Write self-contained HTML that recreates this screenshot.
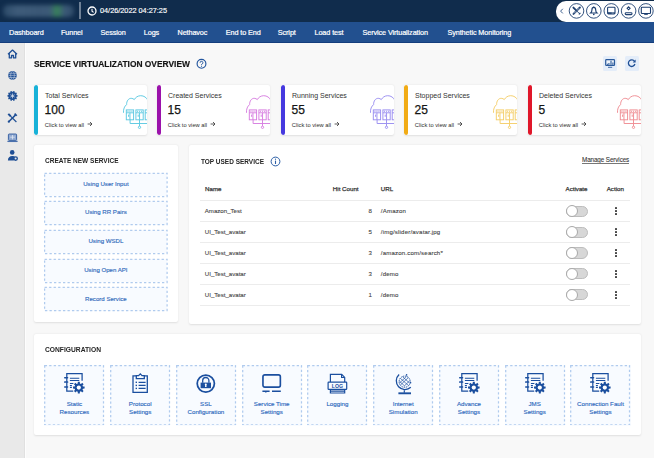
<!DOCTYPE html>
<html><head><meta charset="utf-8">
<style>
*{box-sizing:border-box;margin:0;padding:0}
html,body{width:654px;height:458px;overflow:hidden;background:#f8f8f8;font-family:"Liberation Sans",sans-serif;color:#222;position:relative}
.a{position:absolute;white-space:nowrap}
#hdr{left:0;top:0;width:654px;height:21.5px;background:#102c4c}
#logo{left:3px;top:5px;width:71px;height:12px;border-radius:5px;background:linear-gradient(90deg,#2c4a69 0%,#3f5c7a 20%,#3b5876 50%,#3d5a78 66%,#388458 76%,#3c5a78 86%,#2f4c6a 100%);filter:blur(2.2px)}
#sep{left:79px;top:2px;width:2px;height:17px;background:#6f8196}
#dt{left:100px;top:5.8px;font-size:7.3px;color:#fff;-webkit-text-stroke:0.15px #fff}
#pill{left:556px;top:1px;width:110px;height:20.5px;border-radius:10px;background:#fff}
#nav{left:0;top:21.5px;width:654px;height:21px;background:#22508f;border-bottom:1.5px solid #143d7c}
.nv{top:27.8px;font-size:7.25px;color:#fff;letter-spacing:-0.1px;-webkit-text-stroke:0.2px #fff}
#side{left:0;top:42.5px;width:25px;height:416px;background:#e9e9e9;border-right:0.8px solid #e0e0e0;box-shadow:1px 0 0 #fdfdfd}
#title{left:34px;top:58.8px;font-size:8.7px;transform:scaleX(.9675);transform-origin:0 0;font-weight:bold;color:#141414;-webkit-text-stroke:0.15px #141414}
.card{position:absolute;top:85px;width:112.5px;height:49.8px;background:#fff;box-shadow:0 0.5px 2px rgba(0,0,0,.1);overflow:hidden;border-radius:2px}
.card .bar{position:absolute;left:0;top:0;width:3.7px;height:49.8px;border-radius:2px}
.card .t{position:absolute;left:11px;top:6.8px;font-size:7px;color:#333;white-space:nowrap}
.card .n{position:absolute;left:10.6px;top:18.2px;font-size:12px;color:#151515;white-space:nowrap;-webkit-text-stroke:0.25px #151515}
.card .c{position:absolute;left:10.8px;top:35.6px;font-size:5.75px;color:#2e2e2e;white-space:nowrap}
.card svg{position:absolute;left:86px;top:7px}
.panel{position:absolute;background:#fff;box-shadow:0 0.5px 2px rgba(0,0,0,.1);border-radius:2px}
.ph{font-size:7.7px;font-weight:bold;color:#252525;transform-origin:0 0}
.db{position:absolute;left:44.4px;width:123px;height:23.5px;background:#f8fbff}
.db svg{position:absolute;left:0;top:0}
.db span{position:absolute;left:0;width:100%;top:7.3px;text-align:center;font-size:6.1px;color:#336cbc;-webkit-text-stroke:0.15px #336cbc}
.th{font-size:6.2px;color:#333;-webkit-text-stroke:0.25px #333}
.td{font-size:6.1px;color:#444;-webkit-text-stroke:0.1px #444}
.hr{position:absolute;left:200px;width:430px;height:1px;background:#ececec}
.tog{position:absolute;left:566.2px;width:21.6px;height:11.2px;border-radius:6px;background:#d7d7d7;border:0.8px solid #bdbdbd}
.tog i{position:absolute;left:-1.5px;top:-1.3px;width:12.2px;height:12.2px;border-radius:50%;background:#fff;border:0.8px solid #a9a9a9}
.kb{position:absolute;left:614.8px;width:2.4px}
.kb i{display:block;width:2.2px;height:2px;background:#3a3a3a;margin-bottom:1px;border-radius:0.4px}
.cfg{position:absolute;top:365px;width:60.2px;height:60.5px;background:#f8fbff}
.cfg>svg.bd{position:absolute;left:0;top:0}
.cfg .l{position:absolute;left:0;top:34.8px;width:100%;text-align:center;font-size:6.2px;color:#2d69bd;line-height:8.6px;white-space:nowrap;-webkit-text-stroke:0.14px #2d69bd}
.cfg .ic{position:absolute;left:20px;top:7px}
</style></head><body>
<div id="hdr" class="a"></div>
<div id="logo" class="a"></div>
<div id="sep" class="a"></div>
<svg class="a" style="left:87px;top:6px" width="10" height="10" viewBox="0 0 10 10"><circle cx="5" cy="5" r="4" fill="none" stroke="#fff" stroke-width="1.3"/><path d="M5 2.7v2.5l1.6 1.2" fill="none" stroke="#fff" stroke-width="1.1"/></svg>
<div id="dt" class="a">04/26/2022 04:27:25</div>
<div id="pill" class="a"></div>
<svg class="a" style="left:556px;top:0" width="98" height="22" viewBox="556 0 98 22">
<path d="M562.8 8.8l-2.2 2.3 2.2 2.3" fill="none" stroke="#3d5f8e" stroke-width="1"/>
<g fill="none" stroke="#1d3f70" stroke-width="0.9">
<circle cx="576.5" cy="10.9" r="7.3"/><circle cx="593.8" cy="10.9" r="7.3"/><circle cx="611.3" cy="10.9" r="7.3"/><circle cx="628.6" cy="10.9" r="7.3"/><circle cx="645.9" cy="10.9" r="7.3"/>
</g>
<g fill="none" stroke="#1d3f70" stroke-width="1.1">
<path d="M579.9 7.5L573.5 13.9" stroke-width="1.9" stroke-linecap="round"/><path d="M579.3 8.1L574.1 13.3" stroke="#fff" stroke-width="0.6"/>
<path d="M573.4 7.6L575.7 9.9" stroke-width="1.9" stroke-linecap="round"/><path d="M575.7 9.9L578.9 13.1" stroke-width="0.9"/>
<path d="M578.4 13.9l1.5-1.5 0.9 0.9-1.5 1.5z" fill="#1d3f70" stroke="none"/>
<path d="M590.6 13C591.8 12 591.9 11.4 591.9 9.9C591.9 8.3 592.7 7.4 593.8 7.4C594.9 7.4 595.7 8.3 595.7 9.9C595.7 11.4 595.8 12 597 13Z" stroke-width="1.15"/>
<circle cx="593.8" cy="14.3" r="0.85" fill="#1d3f70" stroke="none"/><circle cx="593.8" cy="6.7" r="0.5" fill="#1d3f70" stroke="none"/>
<rect x="607.6" y="7.3" width="7.4" height="6.6" rx="0.8"/><path d="M607.8 13h7" stroke-width="1.6"/><path d="M611.6 13h2.2" stroke="#fff" stroke-width="0.5"/>
<path d="M628.6 6.8l1.5 1.5-1.5 1.5-1.5-1.5z"/><rect x="625.2" y="12.7" width="6.8" height="1.9" rx="0.9"/>
<rect x="641.3" y="7.3" width="9.2" height="6.2" rx="0.7"/><path d="M644.2 14.2h3.6" stroke-width="1.3"/>
</g>
</svg>
<div id="nav" class="a"></div>
<div class="a nv" style="left:9px">Dashboard</div>
<div class="a nv" style="left:61px">Funnel</div>
<div class="a nv" style="left:100.5px">Session</div>
<div class="a nv" style="left:143.8px">Logs</div>
<div class="a nv" style="left:177.5px">Nethavoc</div>
<div class="a nv" style="left:225.8px">End to End</div>
<div class="a nv" style="left:277.8px">Script</div>
<div class="a nv" style="left:314.5px">Load test</div>
<div class="a nv" style="left:362.5px">Service Virtualization</div>
<div class="a nv" style="left:447.5px">Synthetic Monitoring</div>
<div id="side" class="a"></div>
<svg class="a" style="left:0;top:42px" width="25" height="125" viewBox="0 42 25 125">
<g fill="none" stroke="#1f4f95" stroke-width="1.3" stroke-linejoin="round">
<path d="M8 54.3l4.5-4.2 4.5 4.2M9.3 53.3v4.6h2.2v-2.4h2v2.4h2.2v-4.6"/>
</g>
<circle cx="12.5" cy="75.4" r="4.3" fill="#1f4f95"/>
<g stroke="#c9d4e6" stroke-width="0.55" fill="none"><path d="M8.4 75.4h8.2M9 73.3h7M9 77.5h7"/><ellipse cx="12.5" cy="75.4" rx="1.9" ry="4"/></g>
<path d="M17.56 95.26 L17.56 96.54 L16.63 96.69 L16.30 97.69 L16.97 98.36 L16.22 99.39 L15.38 98.96 L14.52 99.58 L14.67 100.51 L13.46 100.91 L13.03 100.07 L11.97 100.07 L11.54 100.91 L10.33 100.51 L10.48 99.58 L9.62 98.96 L8.78 99.39 L8.03 98.36 L8.70 97.69 L8.37 96.69 L7.44 96.54 L7.44 95.26 L8.37 95.11 L8.70 94.11 L8.03 93.44 L8.78 92.41 L9.62 92.84 L10.48 92.22 L10.33 91.29 L11.54 90.89 L11.97 91.73 L13.03 91.73 L13.46 90.89 L14.67 91.29 L14.52 92.22 L15.38 92.84 L16.22 92.41 L16.97 93.44 L16.30 94.11 L16.63 95.11Z" fill="#1f4f95"/>
<g stroke="#dfe6f0" stroke-width="0.7" fill="none"><path d="M12.5 93.5v4.8M10.4 94.7l4.2 2.4M14.6 94.7l-4.2 2.4"/></g>
<path d="M8.3 113.9l2.4 2.4" stroke="#1f4f95" stroke-width="2" fill="none"/><path d="M10.5 116.1l5.9 5.9" stroke="#1f4f95" stroke-width="1.2" fill="none"/>
<path d="M15.6 114.9l-6.9 6.9" stroke="#1f4f95" stroke-width="1.5" fill="none"/><path d="M14.6 113.6l2.2 2.2" stroke="#1f4f95" stroke-width="1.6" fill="none"/><circle cx="8.8" cy="121.7" r="1.1" fill="#1f4f95"/>
<rect x="8.4" y="134" width="8.2" height="6.4" rx="0.8" fill="#93abd2" stroke="#2f5a9e" stroke-width="0.9"/>
<path d="M7.4 141.4h10.2" stroke="#4a70ad" stroke-width="1.3"/>
<path d="M10.2 137.2h4.6M12.5 135v4.4" stroke="#e6ecf5" stroke-width="0.7"/>
<circle cx="12.2" cy="152.4" r="2.3" fill="#1f4f95"/>
<path d="M7.9 160.4c0-2.7 1.7-4.3 4.3-4.3 1.3 0 2.4.4 3.1 1.1l-1.6 3.2z" fill="#1f4f95"/>
<circle cx="15.6" cy="158.6" r="2.4" fill="#1f4f95"/><circle cx="15.6" cy="158.6" r="1" fill="#e9e9e9"/>
</svg>

<div id="title" class="a">SERVICE VIRTUALIZATION OVERVIEW</div>
<svg class="a" style="left:195px;top:58px" width="13" height="12" viewBox="0 0 13 12"><circle cx="6.5" cy="5.8" r="4.4" fill="none" stroke="#22559e" stroke-width="1.15"/><path d="M5.1 4.7a1.4 1.4 0 1 1 1.9 1.3c-.4.2-.5.5-.5.9v.3" fill="none" stroke="#22559e" stroke-width="1"/><circle cx="6.5" cy="8.3" r="0.55" fill="#22559e"/></svg>
<div class="a" style="left:603px;top:56.3px;width:14px;height:14.3px;border-radius:1.5px;background:#e4edf9"></div>
<div class="a" style="left:624.8px;top:56.3px;width:14px;height:14.3px;border-radius:1.5px;background:#e4edf9"></div>
<svg class="a" style="left:603px;top:56px" width="36" height="15" viewBox="603 56 36 15">
<rect x="605.7" y="59.7" width="8.8" height="5.8" rx="0.7" fill="#eef3fa" stroke="#2a5a9c" stroke-width="1.2"/>
<path d="M607.3 65v-1.2M608.9 65v-1.9M611 65v-4.2M612.9 65v-2.6" stroke="#2a5a9c" stroke-width="1.1"/>
<path d="M608 67.3h4.2" stroke="#2a5a9c" stroke-width="0.9"/>
<path d="M634.5 61.4a3.3 3.3 0 1 0 .4 2.6" fill="none" stroke="#1f4f95" stroke-width="1.3"/>
<path d="M635.6 59.6v2.8h-2.8z" fill="#1f4f95"/>
</svg>

<div class="card" style="left:34px"><div class="bar" style="background:#18b2d8"></div><div class="t">Total Services</div><div class="n">100</div><div class="c">Click to view all<svg width="6" height="6" viewBox="0 0 6 6" style="position:static;vertical-align:-0.5px;margin-left:2.6px"><path d="M0.6 3h4.4M3 1l2 2-2 2" fill="none" stroke="#333" stroke-width="0.8"/></svg></div><svg width="30" height="40" viewBox="0 0 30 40"><use href="#cloud" stroke="#5dc9e2"/></svg></div>
<div class="card" style="left:157px"><div class="bar" style="background:#9b12ab"></div><div class="t">Created Services</div><div class="n">15</div><div class="c">Click to view all<svg width="6" height="6" viewBox="0 0 6 6" style="position:static;vertical-align:-0.5px;margin-left:2.6px"><path d="M0.6 3h4.4M3 1l2 2-2 2" fill="none" stroke="#333" stroke-width="0.8"/></svg></div><svg width="30" height="40" viewBox="0 0 30 40"><use href="#cloud" stroke="#d77de0"/></svg></div>
<div class="card" style="left:281px"><div class="bar" style="background:#4639df"></div><div class="t">Running Services</div><div class="n">55</div><div class="c">Click to view all<svg width="6" height="6" viewBox="0 0 6 6" style="position:static;vertical-align:-0.5px;margin-left:2.6px"><path d="M0.6 3h4.4M3 1l2 2-2 2" fill="none" stroke="#333" stroke-width="0.8"/></svg></div><svg width="30" height="40" viewBox="0 0 30 40"><use href="#cloud" stroke="#9a8ef0"/></svg></div>
<div class="card" style="left:404px"><div class="bar" style="background:#f1ab15"></div><div class="t">Stopped Services</div><div class="n">25</div><div class="c">Click to view all<svg width="6" height="6" viewBox="0 0 6 6" style="position:static;vertical-align:-0.5px;margin-left:2.6px"><path d="M0.6 3h4.4M3 1l2 2-2 2" fill="none" stroke="#333" stroke-width="0.8"/></svg></div><svg width="30" height="40" viewBox="0 0 30 40"><use href="#cloud" stroke="#f4cf6a"/></svg></div>
<div class="card" style="left:528px"><div class="bar" style="background:#e0172a"></div><div class="t">Deleted Services</div><div class="n">5</div><div class="c">Click to view all<svg width="6" height="6" viewBox="0 0 6 6" style="position:static;vertical-align:-0.5px;margin-left:2.6px"><path d="M0.6 3h4.4M3 1l2 2-2 2" fill="none" stroke="#333" stroke-width="0.8"/></svg></div><svg width="30" height="40" viewBox="0 0 30 40"><use href="#cloud" stroke="#ef8d93"/></svg></div>
<svg width="0" height="0" style="position:absolute"><defs>
<g id="cloud" fill="none" stroke-width="0.95">
<path d="M3.5 20.8C3.2 17.2 4.5 14.2 6.6 12.6C6.5 9 8.5 6.3 11.2 6.3C12.5 6.3 13.6 6.9 14.3 7.6C15.5 5.3 17.8 3.8 20.7 3.7C24 3.7 26.5 5.5 28 8.5"/>
<rect x="6.3" y="17.9" width="7.3" height="9.9"/><path d="M6.3 20.8h7.3M9.95 20.8v7M7.4 19.3h1.1M9.4 19.3h1.1M11.4 19.3h1.1M8.6 22.6v2.2"/>
<rect x="15.9" y="17.9" width="7.3" height="9.9"/><path d="M15.9 20.8h7.3M19.55 20.8v7M17 19.3h1.1M19 19.3h1.1M21 19.3h1.1M18.2 22.6v2.2"/>
<rect x="25.2" y="17.9" width="7.3" height="9.9"/><path d="M25.2 20.8h7.3"/>
<path d="M10.1 27.8v3.7h20M19.5 27.8v6.3"/><circle cx="19.5" cy="35.3" r="1.15"/>
</g>
<rect id="dash" x="0.6" y="0.3" width="122.5" height="23.2" fill="none" stroke="#b0cbee" stroke-width="1.25" stroke-dasharray="2.3 2.2"/>
<rect id="dash2" x="0.7" y="0.6" width="58.8" height="59.3" fill="none" stroke="#b0cbee" stroke-width="1.25" stroke-dasharray="2.3 2.2"/>
<path id="nb" d="M0 0"/>
</defs></svg>

<div class="panel" style="left:34px;top:144.8px;width:144.4px;height:177.4px"></div>
<div class="a ph" style="left:45px;top:155.6px;transform:scaleX(.846)">CREATE NEW SERVICE</div>
<div class="db" style="top:172.5px"><svg width="125" height="25" style="overflow:visible"><use href="#dash"/></svg><span>Using User Input</span></div>
<div class="db" style="top:201.2px"><svg width="125" height="25" style="overflow:visible"><use href="#dash"/></svg><span>Using RR Pairs</span></div>
<div class="db" style="top:229.9px"><svg width="125" height="25" style="overflow:visible"><use href="#dash"/></svg><span>Using WSDL</span></div>
<div class="db" style="top:258.6px"><svg width="125" height="25" style="overflow:visible"><use href="#dash"/></svg><span>Using Open API</span></div>
<div class="db" style="top:287.3px"><svg width="125" height="25" style="overflow:visible"><use href="#dash"/></svg><span>Record Service</span></div>

<div class="panel" style="left:188.6px;top:144.8px;width:452px;height:179.3px"></div>
<div class="a ph" style="left:200.8px;top:157px;transform:scaleX(.842)">TOP USED SERVICE</div>
<svg class="a" style="left:269.7px;top:156.2px" width="11" height="11" viewBox="0 0 11 11"><circle cx="5.5" cy="5.5" r="4.4" fill="none" stroke="#2b5ea6" stroke-width="1"/><path d="M5.5 4.6v3.4" stroke="#2b5ea6" stroke-width="1.1"/><circle cx="5.5" cy="3.2" r="0.6" fill="#2b5ea6"/></svg>
<div class="a" style="left:582px;top:156.2px;font-size:6.3px;letter-spacing:-0.1px;color:#333;-webkit-text-stroke:0.08px #333">Manage Services</div><div class="a" style="left:582.3px;top:162.9px;width:47px;height:0.6px;background:#777"></div>
<div class="a th" style="left:205px;top:184.6px">Name</div>
<div class="a th" style="left:332.8px;top:184.6px">Hit Count</div>
<div class="a th" style="left:380.8px;top:184.6px">URL</div>
<div class="a th" style="left:565.5px;top:184.6px">Activate</div>
<div class="a th" style="left:606.7px;top:184.6px">Action</div>
<div class="hr" style="top:200px"></div>
<div class="hr" style="top:221px"></div>
<div class="hr" style="top:242px"></div>
<div class="hr" style="top:263px"></div>
<div class="hr" style="top:284px"></div>
<div class="hr" style="top:304.5px"></div>

<div class="a td" style="left:204.8px;top:207px">Amazon_Test</div>
<div class="a td" style="left:204.8px;top:228px">UI_Test_avatar</div>
<div class="a td" style="left:204.8px;top:249px">UI_Test_avatar</div>
<div class="a td" style="left:204.8px;top:270px">UI_Test_avatar</div>
<div class="a td" style="left:204.8px;top:290.8px">UI_Test_avatar</div>
<div class="a td" style="left:368.5px;top:207px">8</div>
<div class="a td" style="left:368.5px;top:228px">5</div>
<div class="a td" style="left:368.5px;top:249px">3</div>
<div class="a td" style="left:368.5px;top:270px">3</div>
<div class="a td" style="left:368.5px;top:290.8px">1</div>
<div class="a td" style="letter-spacing:0.17px;left:380.8px;top:207px">/Amazon</div>
<div class="a td" style="letter-spacing:0.17px;left:380.8px;top:228px">/img/slider/avatar.jpg</div>
<div class="a td" style="letter-spacing:0.17px;left:380.8px;top:249px">/amazon.com/search*</div>
<div class="a td" style="letter-spacing:0.17px;left:380.8px;top:270px">/demo</div>
<div class="a td" style="letter-spacing:0.17px;left:380.8px;top:290.8px">/demo</div>
<div class="tog" style="top:205.6px"><i></i></div>
<div class="tog" style="top:226.5px"><i></i></div>
<div class="tog" style="top:247.4px"><i></i></div>
<div class="tog" style="top:268.3px"><i></i></div>
<div class="tog" style="top:289.2px"><i></i></div>
<div class="kb" style="top:207.0px"><i></i><i></i><i></i></div>
<div class="kb" style="top:227.9px"><i></i><i></i><i></i></div>
<div class="kb" style="top:248.8px"><i></i><i></i><i></i></div>
<div class="kb" style="top:269.7px"><i></i><i></i><i></i></div>
<div class="kb" style="top:290.6px"><i></i><i></i><i></i></div>

<div class="panel" style="left:34px;top:334.4px;width:607px;height:101px"></div>
<div class="a ph" style="left:44.8px;top:344.6px;transform:scaleX(.87)">CONFIGURATION</div>
<!--CFG-->
<div class="cfg" style="left:44.3px"><svg class="bd" width="61" height="60"><use href="#dash2"/></svg><svg class="ic" width="23" height="23" viewBox="0 0 23 23"><g fill="none" stroke="#1b4f9f" stroke-width="1.25"><path d="M18.1 8.8V1.6H2.8V19H9.4"/></g>
<g fill="#1b4f9f"><rect x="0" y="5.05" width="4.3" height="1.5" rx="0.7"/><rect x="0" y="9.35" width="4.3" height="1.5" rx="0.7"/><rect x="0" y="14.25" width="4.3" height="1.5" rx="0.7"/></g>
<g stroke="#1b4f9f" stroke-width="1.05"><path d="M5.9 6.3h9.4M5.9 8.4h9.4M5.9 11.4h3.6M5.9 13.6h2M5.9 15.5h2"/></g>
<g transform="translate(-0.2 0.1)"><path d="M20.81 14.49 L20.81 16.51 L19.16 16.57 L18.70 17.69 L19.83 18.89 L18.39 20.33 L17.19 19.20 L16.07 19.66 L16.01 21.31 L13.99 21.31 L13.93 19.66 L12.81 19.20 L11.61 20.33 L10.17 18.89 L11.30 17.69 L10.84 16.57 L9.19 16.51 L9.19 14.49 L10.84 14.43 L11.30 13.31 L10.17 12.11 L11.61 10.67 L12.81 11.80 L13.93 11.34 L13.99 9.69 L16.01 9.69 L16.07 11.34 L17.19 11.80 L18.39 10.67 L19.83 12.11 L18.70 13.31 L19.16 14.43Z" fill="#1b4f9f" stroke="#fff" stroke-width="1.3" paint-order="stroke"/><circle cx="15" cy="15.5" r="2.1" fill="#fff"/></g></svg><div class="l">Static<br>Resources</div></div>
<div class="cfg" style="left:110.1px"><svg class="bd" width="61" height="60"><use href="#dash2"/></svg><svg class="ic" width="23" height="23" viewBox="0 0 23 23"><g fill="none" stroke="#1b4f9f" stroke-width="1.3"><path d="M6.2 3.9H3V20.3H17.3V3.9H14.4"/><path d="M6.3 6.6H14.3L14.3 3.6 12 3.6 10.3 1.9 8.6 3.6 6.3 3.6Z"/></g>
<g fill="#1b4f9f"><rect x="5.6" y="9.6" width="1.4" height="1.4"/><rect x="5.6" y="12.7" width="1.4" height="1.4"/><rect x="5.6" y="15.7" width="1.4" height="1.4"/></g>
<g stroke="#1b4f9f" stroke-width="1.2"><path d="M8.6 10.3h7M8.6 13.4h7M8.6 16.4h7"/></g></svg><div class="l">Protocol<br>Settings</div></div>
<div class="cfg" style="left:175.8px"><svg class="bd" width="61" height="60"><use href="#dash2"/></svg><svg class="ic" width="23" height="23" viewBox="0 0 23 23"><circle cx="9.8" cy="11.6" r="8.6" fill="none" stroke="#1b4f9f" stroke-width="1.75"/>
<path d="M6.7 10.8V8.6a3.1 3.1 0 0 1 6.2 0v2.2" fill="none" stroke="#1b4f9f" stroke-width="1.3"/>
<rect x="4.6" y="10.6" width="10.4" height="5.6" fill="#1b4f9f"/><circle cx="9.8" cy="12.6" r="1" fill="#fff"/><path d="M9.3 12.8h1l.3 2.2h-1.6z" fill="#fff"/></svg><div class="l">SSL<br>Configuration</div></div>
<div class="cfg" style="left:241.6px"><svg class="bd" width="61" height="60"><use href="#dash2"/></svg><svg class="ic" width="23" height="23" viewBox="0 0 23 23"><rect x="0.95" y="2.9" width="17.4" height="12.2" rx="1.8" fill="none" stroke="#1b4f9f" stroke-width="1.65"/>
<path d="M0.4 19.2h7.2M10 19.2h8.8" stroke="#1b4f9f" stroke-width="1.6"/><path d="M2.8 19.6h2.2l-1.1 1.3z" fill="#1b4f9f"/></svg><div class="l">Service Time<br>Settings</div></div>
<div class="cfg" style="left:307.3px"><svg class="bd" width="61" height="60"><use href="#dash2"/></svg><svg class="ic" width="23" height="23" viewBox="0 0 23 23"><g fill="none" stroke="#1b4f9f" stroke-width="1.2"><path d="M3.4 10V2.4H14.7L17.7 5.4V10"/><path d="M14.6 2.6V5.5H17.5"/><rect x="1.1" y="10.2" width="18.6" height="7.2" rx="0.6"/><path d="M3.4 17.4V21H17.7V17.4M3.4 19.2H17.7"/></g>
<text x="10.4" y="16" font-family="Liberation Sans" font-size="5.2" font-weight="bold" text-anchor="middle" fill="#1b4f9f">LOG</text></svg><div class="l">Logging</div></div>
<div class="cfg" style="left:373.1px"><svg class="bd" width="61" height="60"><use href="#dash2"/></svg><svg class="ic" width="23" height="23" viewBox="0 0 23 23"><circle cx="11.7" cy="9.7" r="5.6" fill="none" stroke="#1b4f9f" stroke-width="1" stroke-dasharray="1.2 0.8"/>
<g stroke="#1b4f9f" stroke-width="0.8" fill="none" opacity="0.85"><path d="M7.5 6.5l8 7M9.5 4.6l7 6.4M6.5 9.3l5.5 5M15.5 5.4l-8 7.6M13.5 4.4l-7 6.6M16.8 8.6l-5.3 5.2"/></g>
<path d="M6.1 2.6A8.2 8.2 0 0 0 17.8 15.3" fill="none" stroke="#1b4f9f" stroke-width="1.3"/>
<circle cx="13.6" cy="2.9" r="0.8" fill="#1b4f9f"/><circle cx="17.6" cy="10.8" r="0.8" fill="#1b4f9f"/>
<path d="M11.3 18.2v2.6" stroke="#1b4f9f" stroke-width="1.2"/><path d="M5.4 21.3h12.6" stroke="#1b4f9f" stroke-width="1.9"/></svg><div class="l">Internet<br>Simulation</div></div>
<div class="cfg" style="left:438.9px"><svg class="bd" width="61" height="60"><use href="#dash2"/></svg><svg class="ic" width="23" height="23" viewBox="0 0 23 23"><g fill="none" stroke="#1b4f9f" stroke-width="1.25"><path d="M18.1 8.8V1.6H2.8V19H9.4"/></g>
<g fill="#1b4f9f"><rect x="0" y="5.05" width="4.3" height="1.5" rx="0.7"/><rect x="0" y="9.35" width="4.3" height="1.5" rx="0.7"/><rect x="0" y="14.25" width="4.3" height="1.5" rx="0.7"/></g>
<g stroke="#1b4f9f" stroke-width="1.05"><path d="M5.9 6.3h9.4M5.9 8.4h9.4M5.9 11.4h3.6M5.9 13.6h2M5.9 15.5h2"/></g>
<g transform="translate(-0.2 0.1)"><path d="M20.81 14.49 L20.81 16.51 L19.16 16.57 L18.70 17.69 L19.83 18.89 L18.39 20.33 L17.19 19.20 L16.07 19.66 L16.01 21.31 L13.99 21.31 L13.93 19.66 L12.81 19.20 L11.61 20.33 L10.17 18.89 L11.30 17.69 L10.84 16.57 L9.19 16.51 L9.19 14.49 L10.84 14.43 L11.30 13.31 L10.17 12.11 L11.61 10.67 L12.81 11.80 L13.93 11.34 L13.99 9.69 L16.01 9.69 L16.07 11.34 L17.19 11.80 L18.39 10.67 L19.83 12.11 L18.70 13.31 L19.16 14.43Z" fill="#1b4f9f" stroke="#fff" stroke-width="1.3" paint-order="stroke"/><circle cx="15" cy="15.5" r="2.1" fill="#fff"/></g></svg><div class="l">Advance<br>Settings</div></div>
<div class="cfg" style="left:504.6px"><svg class="bd" width="61" height="60"><use href="#dash2"/></svg><svg class="ic" width="23" height="23" viewBox="0 0 23 23"><g fill="none" stroke="#1b4f9f" stroke-width="1.25"><path d="M18.1 8.8V1.6H2.8V19H9.4"/></g>
<g fill="#1b4f9f"><rect x="0" y="5.05" width="4.3" height="1.5" rx="0.7"/><rect x="0" y="9.35" width="4.3" height="1.5" rx="0.7"/><rect x="0" y="14.25" width="4.3" height="1.5" rx="0.7"/></g>
<g stroke="#1b4f9f" stroke-width="1.05"><path d="M5.9 6.3h9.4M5.9 8.4h9.4M5.9 11.4h3.6M5.9 13.6h2M5.9 15.5h2"/></g>
<g transform="translate(-0.2 0.1)"><path d="M20.81 14.49 L20.81 16.51 L19.16 16.57 L18.70 17.69 L19.83 18.89 L18.39 20.33 L17.19 19.20 L16.07 19.66 L16.01 21.31 L13.99 21.31 L13.93 19.66 L12.81 19.20 L11.61 20.33 L10.17 18.89 L11.30 17.69 L10.84 16.57 L9.19 16.51 L9.19 14.49 L10.84 14.43 L11.30 13.31 L10.17 12.11 L11.61 10.67 L12.81 11.80 L13.93 11.34 L13.99 9.69 L16.01 9.69 L16.07 11.34 L17.19 11.80 L18.39 10.67 L19.83 12.11 L18.70 13.31 L19.16 14.43Z" fill="#1b4f9f" stroke="#fff" stroke-width="1.3" paint-order="stroke"/><circle cx="15" cy="15.5" r="2.1" fill="#fff"/></g></svg><div class="l">JMS<br>Settings</div></div>
<div class="cfg" style="left:570.4px"><svg class="bd" width="61" height="60"><use href="#dash2"/></svg><svg class="ic" width="23" height="23" viewBox="0 0 23 23"><g fill="none" stroke="#1b4f9f" stroke-width="1.25"><path d="M18.1 8.8V1.6H2.8V19H9.4"/></g>
<g fill="#1b4f9f"><rect x="0" y="5.05" width="4.3" height="1.5" rx="0.7"/><rect x="0" y="9.35" width="4.3" height="1.5" rx="0.7"/><rect x="0" y="14.25" width="4.3" height="1.5" rx="0.7"/></g>
<g stroke="#1b4f9f" stroke-width="1.05"><path d="M5.9 6.3h9.4M5.9 8.4h9.4M5.9 11.4h3.6M5.9 13.6h2M5.9 15.5h2"/></g>
<g transform="translate(-0.2 0.1)"><path d="M20.81 14.49 L20.81 16.51 L19.16 16.57 L18.70 17.69 L19.83 18.89 L18.39 20.33 L17.19 19.20 L16.07 19.66 L16.01 21.31 L13.99 21.31 L13.93 19.66 L12.81 19.20 L11.61 20.33 L10.17 18.89 L11.30 17.69 L10.84 16.57 L9.19 16.51 L9.19 14.49 L10.84 14.43 L11.30 13.31 L10.17 12.11 L11.61 10.67 L12.81 11.80 L13.93 11.34 L13.99 9.69 L16.01 9.69 L16.07 11.34 L17.19 11.80 L18.39 10.67 L19.83 12.11 L18.70 13.31 L19.16 14.43Z" fill="#1b4f9f" stroke="#fff" stroke-width="1.3" paint-order="stroke"/><circle cx="15" cy="15.5" r="2.1" fill="#fff"/></g></svg><div class="l">Connection Fault<br>Settings</div></div>
<!--/CFG-->
</body></html>
